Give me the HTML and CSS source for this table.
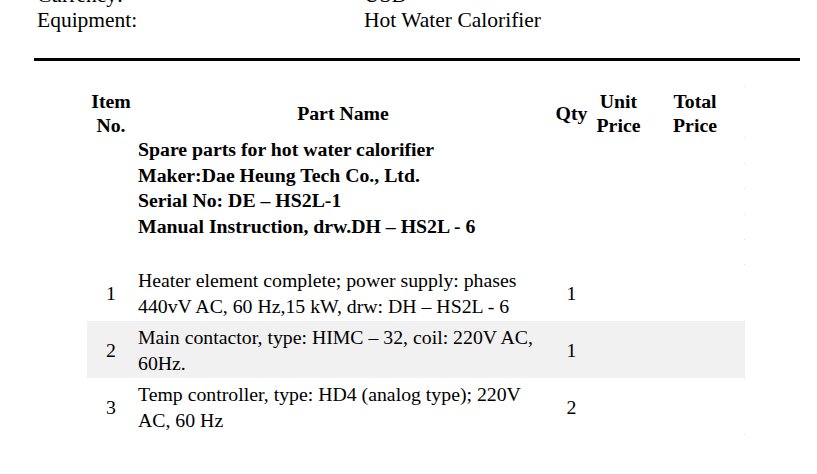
FILE: index.html
```html
<!DOCTYPE html>
<html>
<head>
<meta charset="utf-8">
<link rel="stylesheet" href="styles.css">
</head>
<body>
<div class="page">
  <div class="info">
    <div class="label">Currency:</div><div class="value">USD</div>
    <div class="label">Equipment:</div><div class="value">Hot Water Calorifier</div>
  </div>
  <div class="rule"></div>
  <table class="parts">
    <colgroup>
      <col class="c-item"><col class="c-name"><col class="c-qty"><col class="c-unit"><col class="c-total">
    </colgroup>
    <thead>
      <tr class="head">
        <th>Item<br>No.</th>
        <th>Part Name</th>
        <th>Qty</th>
        <th>Unit<br>Price</th>
        <th class="last">Total<br>Price</th>
      </tr>
    </thead>
    <tbody>
      <tr class="title"><td></td><td class="name">Spare parts for hot water calorifier</td><td></td><td></td><td class="last"></td></tr>
      <tr class="title"><td></td><td class="name">Maker:Dae Heung Tech Co., Ltd.</td><td></td><td></td><td class="last"></td></tr>
      <tr class="title"><td></td><td class="name">Serial No: DE – HS2L-1</td><td></td><td></td><td class="last"></td></tr>
      <tr class="title"><td></td><td class="name">Manual Instruction, drw.DH – HS2L - 6</td><td></td><td></td><td class="last"></td></tr>
      <tr class="spacer"><td></td><td></td><td></td><td></td><td class="last"></td></tr>
      <tr class="item">
        <td class="num">1</td>
        <td class="name">Heater element complete; power supply: phases<br>440vV AC, 60 Hz,15 kW, drw: DH – HS2L - 6</td>
        <td class="num">1</td><td></td><td class="last"></td>
      </tr>
      <tr class="item shaded">
        <td class="num">2</td>
        <td class="name">Main contactor, type: HIMC – 32, coil: 220V AC,<br>60Hz.</td>
        <td class="num">1</td><td></td><td class="last"></td>
      </tr>
      <tr class="item final">
        <td class="num">3</td>
        <td class="name">Temp controller, type: HD4 (analog type); 220V<br>AC, 60 Hz</td>
        <td class="num">2</td><td></td><td class="last"></td>
      </tr>
    </tbody>
  </table>
</div>
</body>
</html>
```

FILE: styles.css
```css
html, body {
  margin: 0;
  padding: 0;
  background: #ffffff;
}

body {
  font-family: "Liberation Serif", "Times New Roman", serif;
  color: #000000;
  width: 817px;
  height: 474px;
  overflow: hidden;
}

.page {
  display: flex;
  flex-direction: column;
}

.info {
  display: grid;
  grid-template-columns: 327px auto;
  margin-top: -17px;
  padding-left: 37px;
  font-size: 21.5px;
  line-height: 25px;
}

.rule {
  margin: 25px 0 0 34px;
  width: 766px;
  height: 3px;
  background: #000000;
}

.parts {
  margin: 25px 0 0 87px;
  width: 658px;
  border-collapse: collapse;
  table-layout: fixed;
  font-size: 19.8px;
}

.c-item { width: 48px; }
.c-name { width: 416px; }
.c-qty { width: 41px; }
.c-unit { width: 53px; }
.c-total { width: 100px; }

.parts th,
.parts td {
  padding: 0;
  vertical-align: middle;
}

.parts .last {
  background-image: linear-gradient(#e2e2e2, #e2e2e2);
  background-size: 1px 1px;
  background-position: right top;
  background-repeat: no-repeat;
}

.head th {
  font-weight: bold;
  text-align: center;
  line-height: 24px;
  padding-top: 3px;
  height: 48px;
}

.title td {
  font-weight: bold;
  line-height: 24px;
  height: 24px;
  padding-bottom: 1.5px;
}

.spacer td {
  height: 25px;
}

.name {
  padding-left: 3px;
  text-align: left;
  white-space: nowrap;
}

.parts td.name {
  padding-left: 3px;
}

.item td {
  line-height: 26px;
  height: 52px;
  padding-top: 3px;
  padding-bottom: 2px;
}

.item td.num {
  text-align: center;
}

.shaded td {
  background-color: #f1f1f1;
}

.final td.last {
  background-image: linear-gradient(#e2e2e2, #e2e2e2), linear-gradient(#e2e2e2, #e2e2e2);
  background-size: 1px 1px, 1px 1px;
  background-position: right top, right bottom;
  background-repeat: no-repeat;
}
```
